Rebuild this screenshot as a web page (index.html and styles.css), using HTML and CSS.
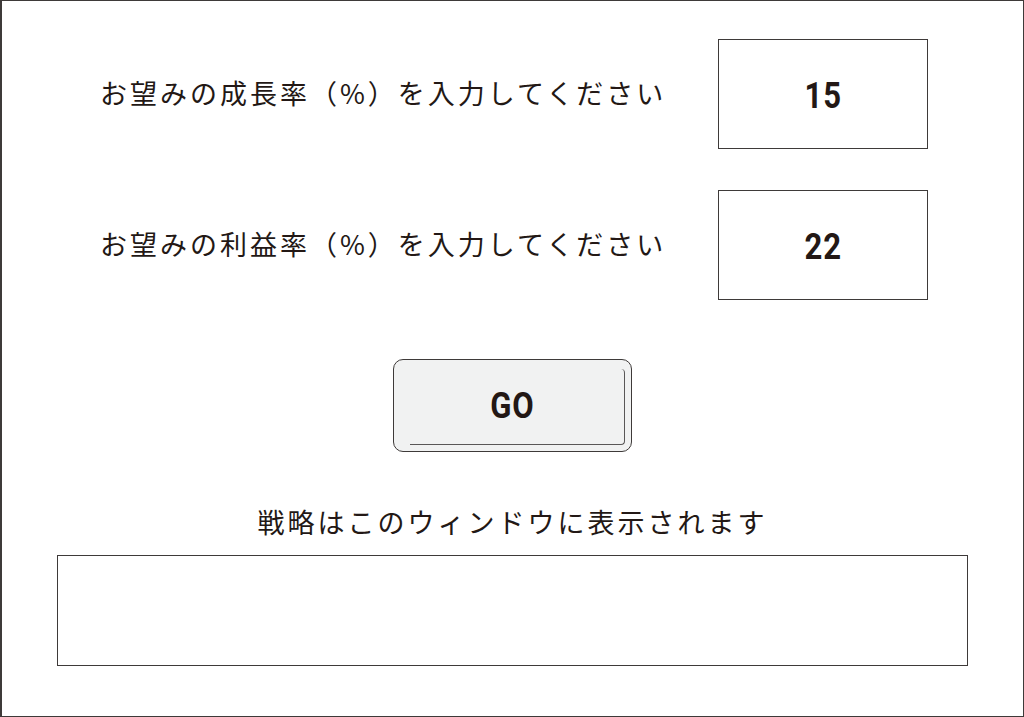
FILE: index.html
```html
<!DOCTYPE html>
<html lang="ja">
<head>
    <meta charset="UTF-8">
    <meta name="viewport" content="width=device-width, initial-scale=1.0">
    <title>戦略シミュレーター</title>
    <link rel="stylesheet" href="styles.css">
</head>
<body>
    <div class="page">
        <div class="field-row">
            <label class="field-label" for="growth">お望みの成長率（%）を入力してください</label>
            <div class="field-box" id="growth"><span class="num">15</span></div>
        </div>
        <div class="field-row">
            <label class="field-label" for="profit">お望みの利益率（%）を入力してください</label>
            <div class="field-box" id="profit"><span class="num">22</span></div>
        </div>

        <div class="button-row">
            <button class="go-button" type="button"><span class="num">GO</span></button>
        </div>

        <p class="result-caption">戦略はこのウィンドウに表示されます</p>
        <div class="result-box"></div>
    </div>
</body>
</html>
```

FILE: styles.css
```css
body {
    margin: 0;
    padding: 0;
    background-color: #fff;
    color: #231815;
    font-family: "Noto Sans CJK JP", "Noto Sans", sans-serif;
}

.page {
    box-sizing: border-box;
    width: 1024px;
    height: 717px;
    border: 1px solid #3e3a39;
    border-left-width: 2px;
    padding-top: 38px;
}

.field-row {
    display: grid;
    grid-template-columns: 618px 210px;
    align-items: center;
    padding-left: 98px;
    margin-bottom: 41px;
}

.field-label {
    font-size: 27px;
    letter-spacing: 3px;
    white-space: nowrap;
    margin-top: -4px;
}

.field-box {
    box-sizing: border-box;
    height: 110px;
    border: 1px solid #3e3a39;
    display: flex;
    align-items: center;
    justify-content: center;
    padding-top: 2px;
}

.num {
    display: inline-block;
    font-family: Roboto, "Liberation Sans", sans-serif;
    font-weight: bold;
    font-size: 37px;
    letter-spacing: 1px;
    transform: scaleX(0.84);
}

.button-row {
    display: flex;
    justify-content: center;
    margin-top: 59px;
}

.go-button {
    position: relative;
    box-sizing: border-box;
    width: 239px;
    height: 93px;
    border: 1px solid #3e3a39;
    border-radius: 10px;
    background-color: #f1f2f2;
    color: #231815;
    padding: 0;
}

.go-button::after {
    content: "";
    position: absolute;
    left: 16px;
    right: 6px;
    top: 9px;
    bottom: 6px;
    border-right: 1.5px solid #595757;
    border-bottom: 1.5px solid #595757;
    border-radius: 0 4px 4px 0;
}

.result-caption {
    margin: 54px 0 0;
    text-align: center;
    font-size: 27px;
    letter-spacing: 3px;
    line-height: 32px;
}

.result-box {
    box-sizing: border-box;
    width: 911px;
    height: 111px;
    margin: 17px 0 0 55px;
    border: 1px solid #3e3a39;
    border-width: 1px 1.5px 1.5px 1.5px;
}
```
